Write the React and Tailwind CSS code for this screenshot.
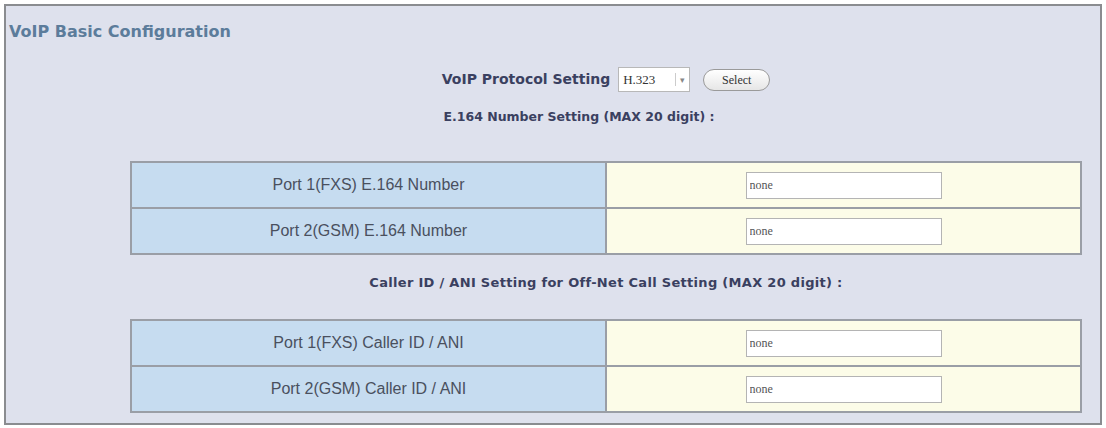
// App.jsx - VoIP basic configuration panel
import React, { useState } from 'react';

const e164Rows = [
  { id: 'p1-e164', label: 'Port 1(FXS) E.164 Number' },
  { id: 'p2-e164', label: 'Port 2(GSM) E.164 Number' },
];

const callerRows = [
  { id: 'p1-ani', label: 'Port 1(FXS) Caller ID / ANI' },
  { id: 'p2-ani', label: 'Port 2(GSM) Caller ID / ANI' },
];

const SettingTable = ({ rows, values, onChange }) => (
  <table className="w-full border-collapse border-2 border-[#9a9ea6]">
    <tbody>
      {rows.map((row) => (
        <tr key={row.id} className="h-[46px]">
          <td className="w-1/2 border-2 border-[#9a9ea6] bg-[#c6dcf0] text-center text-[16px] text-[#4a505e] font-['Liberation_Sans',sans-serif]">
            {row.label}
          </td>
          <td className="w-1/2 border-2 border-[#9a9ea6] bg-[#fcfce8] text-center">
            <input
              type="text"
              value={values[row.id]}
              onChange={(e) => onChange(row.id, e.target.value)}
              className="w-[196px] h-[27px] border border-[#b4b4b4] bg-white px-[3px] text-[12px] text-[#555] font-['Liberation_Serif',serif] outline-none align-middle"
            />
          </td>
        </tr>
      ))}
    </tbody>
  </table>
);

const App = () => {
  const [protocol, setProtocol] = useState('H.323');
  const [values, setValues] = useState({
    'p1-e164': 'none',
    'p2-e164': 'none',
    'p1-ani': 'none',
    'p2-ani': 'none',
  });

  const handleChange = (id, value) => {
    setValues((prev) => ({ ...prev, [id]: value }));
  };

  return (
    <div className="w-[1106px] h-[428px] bg-white pt-[4px] pl-[4px] pr-[4px] overflow-hidden">
      <div className="h-[421px] border-2 border-[#8a8c90] bg-[#dee1ed]">
        {/* Title */}
        <div className="pl-[3px] pt-[16px] h-[35px] leading-[19px] text-[16px] font-bold text-[#5c7c9b] font-['DejaVu_Sans',sans-serif]">
          VoIP Basic Configuration
        </div>

        <div className="ml-[124px] w-[952px]">
          {/* Protocol selection */}
          <div className="mt-[26px] flex items-center justify-center h-[25px]">
            <span className="text-[14px] font-bold text-[#3a4060] font-['DejaVu_Sans',sans-serif]">
              VoIP Protocol Setting
            </span>
            <div className="ml-[8px] flex items-center w-[72px] h-[25px] border border-[#b8b8b8] bg-white">
              <span className="pl-[4px] text-[13px] text-[#333] font-['Liberation_Serif',serif]">{protocol}</span>
              <span className="ml-auto mr-[4px] flex items-center text-[9px] text-[#888]">
                <span className="mr-[4px] h-[13px] w-px bg-[#ccc]"></span>▾
              </span>
            </div>
            <button
              onClick={() => setProtocol(protocol)}
              className="ml-[13px] w-[67px] h-[22px] rounded-[11px] border border-[#9a9a9a] bg-gradient-to-b from-white to-[#e6e6e6] text-[12px] text-[#333] font-['Liberation_Serif',serif]"
            >
              Select
            </button>
          </div>

          {/* E.164 */}
          <div className="mt-[17px] mr-[54px] h-[16px] leading-[16px] text-center text-[12.5px] font-bold text-[#3a4060] font-['DejaVu_Sans',sans-serif]">
            E.164 Number Setting (MAX 20 digit) :
          </div>
          <div className="mt-[36px]">
            <SettingTable rows={e164Rows} values={values} onChange={handleChange} />
          </div>

          {/* Caller ID */}
          <div className="mt-[20px] h-[16px] leading-[16px] text-center text-[13px] tracking-[0.3px] font-bold text-[#3a4060] font-['DejaVu_Sans',sans-serif]">
            Caller ID / ANI Setting for Off-Net Call Setting (MAX 20 digit) :
          </div>
          <div className="mt-[28px]">
            <SettingTable rows={callerRows} values={values} onChange={handleChange} />
          </div>
        </div>
      </div>
    </div>
  );
};

export default App;
